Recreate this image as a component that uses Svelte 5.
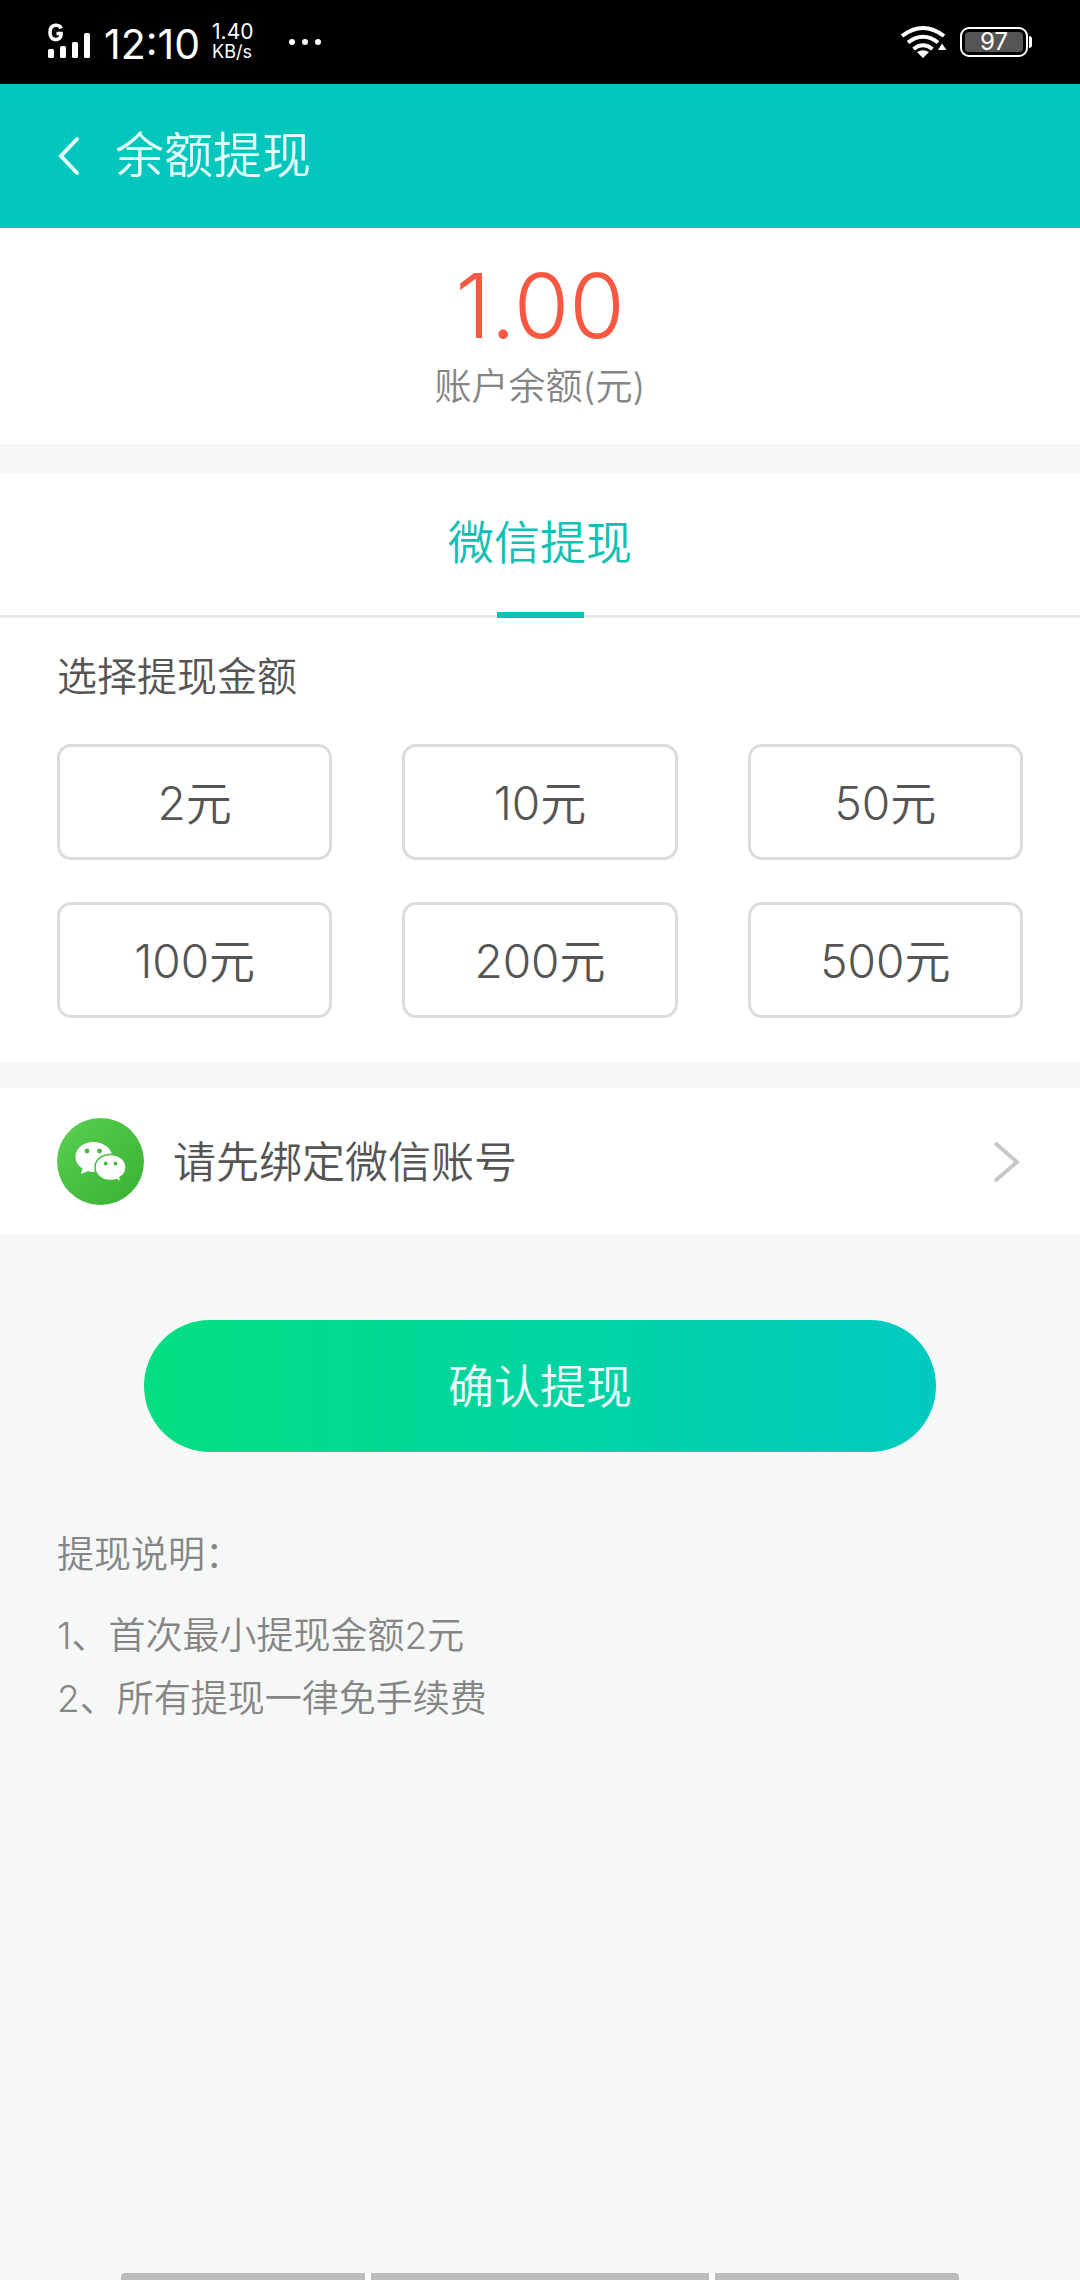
<script>
  const amounts = [2, 10, 50, 100, 200, 500];
  const notes = ['1、首次最小提现金额2元', '2、所有提现一律免手续费'];
  let selected = $state(null);
</script>

<div class="screen">
  <div class="status">
    <svg class="signal" viewBox="0 0 44 40" aria-hidden="true">
      <path d="M13 6.500C12 2 2 1 2 10.500S12.500 19 13 13V11.500H8.500" fill="none" stroke="#fff" stroke-width="3.600" />
      <g fill="#fff">
        <rect x="0" y="27" width="6" height="9" rx="1.500" />
        <rect x="12" y="24" width="6" height="12" rx="1.500" />
        <rect x="24" y="20" width="6" height="16" rx="1.500" />
        <rect x="36" y="11" width="6" height="25" rx="1.500" />
      </g>
    </svg>
    <span class="time">12:10</span>
    <span class="speed"><span>1.40</span><span class="unit">KB/s</span></span>
    <svg class="dots" viewBox="0 0 32 6" aria-hidden="true" fill="#fff">
      <circle cx="3" cy="3" r="3" /><circle cx="16" cy="3" r="3" /><circle cx="29" cy="3" r="3" />
    </svg>
    <svg class="wifi" viewBox="0 0 48 36" aria-hidden="true">
      <g fill="none" stroke="#fff" stroke-width="4">
        <path d="M2 12Q23 -4 44 12" />
        <path d="M8 18.500Q23 7 38 18.500" />
        <path d="M13.500 25Q23 17.500 32.500 25" />
      </g>
      <path d="M17 28Q23 24.500 29 28L23 34ZM38 26L42 19.500L46.500 26Z" fill="#fff" />
    </svg>
    <div class="battery"><span class="charge">97</span></div>
  </div>

  <header class="bar">
    <button class="back" aria-label="返回">
      <svg viewBox="0 0 24 40"><path d="M20 3L4 20L20 37" fill="none" stroke="#e4fffc" stroke-width="4" stroke-linecap="round" /></svg>
    </button>
    <h1>余额提现</h1>
  </header>

  <main>
    <section class="balance">
      <strong>1.00</strong>
      <span>账户余额(元)</span>
    </section>

    <section class="withdraw">
      <nav class="tabs"><button class="tab">微信提现</button></nav>
      <div class="choose">
        <h2>选择提现金额</h2>
        <div class="grid">
          {#each amounts as amount}
            <button class="amount" aria-pressed={selected === amount} onclick={() => (selected = amount)}>{amount}元</button>
          {/each}
        </div>
      </div>
    </section>

    <button class="account">
      <svg class="wechat" viewBox="0 0 87 87" aria-hidden="true">
        <defs>
          <linearGradient id="wechat-green" x1="0" y1="0" x2="1" y2="1">
            <stop offset="0" stop-color="#5bd053" /><stop offset="1" stop-color="#38b031" />
          </linearGradient>
        </defs>
        <circle cx="43.500" cy="43.500" r="43.500" fill="url(#wechat-green)" />
        <path d="M36.500 24C26 24 18.500 30.500 18.500 39C18.500 44 21 47.500 25.500 50.500L24 56L31 53Q35 54.500 40 53.500L55 37C53.500 29.500 46 24 36.500 24Z" fill="#fff" />
        <path d="M53.500 36.500C44.500 36.500 38 42 38 49.500S44.500 62.500 53.500 62.500Q57 62.500 60 61.500L64 64.500L63 59.500C67 57 69 53.500 69 49.500C69 42 62.500 36.500 53.500 36.500Z" fill="#fff" stroke="#47bd40" stroke-width="1.500" />
        <g fill="#47bd40">
          <circle cx="30" cy="33" r="2.400" /><circle cx="42.500" cy="33" r="2.400" />
          <circle cx="48.700" cy="45.500" r="1.900" /><circle cx="58.500" cy="45.500" r="1.900" />
        </g>
      </svg>
      <span>请先绑定微信账号</span>
      <svg class="next" viewBox="0 0 30 42" aria-hidden="true"><path d="M2 2L24 21L2 40" fill="none" stroke="#c8c8c8" stroke-width="4" /></svg>
    </button>

    <button class="confirm">确认提现</button>

    <section class="notes">
      <h3>提现说明：</h3>
      {#each notes as note}
        <p>{note}</p>
      {/each}
    </section>
  </main>

  <div class="system"><i></i><i></i><i></i></div>
</div>

<style>
  :global(body) { margin: 0; }
  .screen {
    min-height: 100vh;
    display: flex;
    flex-direction: column;
    background: #f5f8f7;
    color: #555;
    font-family: Inter, "Noto Sans CJK SC", sans-serif;
    font-weight: 350;
  }
  button {
    border: 0;
    margin: 0;
    padding: 0;
    background: none;
    color: inherit;
    font: inherit;
    cursor: pointer;
  }
  h1, h2, h3, p { margin: 0; font-weight: inherit; }
  svg { display: block; flex: none; }

  .status {
    display: flex;
    align-items: center;
    height: 84px;
    padding: 0 52px 0 48px;
    box-sizing: border-box;
    background: #000;
    color: #fff;
    font-weight: 400;
  }
  .signal { width: 44px; height: 40px; }
  .time { margin-left: 12px; padding-top: 4px; font-size: 41px; line-height: 48px; }
  .speed { display: flex; flex-direction: column; margin-left: 12px; font-size: 21px; line-height: 20px; }
  .unit { font-size: 18px; }
  .dots { width: 32px; height: 6px; margin-left: 36px; }
  .wifi { width: 48px; height: 36px; margin-left: auto; }
  .battery {
    position: relative;
    width: 68px;
    height: 30px;
    margin-left: 12px;
    padding: 3px;
    box-sizing: border-box;
    border: 2px solid #fff;
    border-radius: 9px;
  }
  .battery::after {
    content: "";
    position: absolute;
    right: -6px;
    top: 7px;
    width: 3px;
    height: 12px;
    border-radius: 0 4px 4px 0;
    background: #fff;
  }
  .charge {
    display: block;
    border-radius: 4px;
    background: #555;
    text-align: center;
    font-size: 24px;
    line-height: 20px;
  }

  .bar {
    display: flex;
    align-items: center;
    gap: 34px;
    height: 144px;
    padding: 0 57px;
    background: #03c7bc;
    color: #e4fffc;
  }
  .back svg { width: 24px; height: 40px; }
  h1 { font-size: 49px; line-height: 56px; }

  .balance {
    display: flex;
    flex-direction: column;
    align-items: center;
    padding: 24px 0 30px;
    background: #fff;
  }
  .balance strong { color: #f85842; font-size: 90px; line-height: 108px; font-weight: 300; }
  .balance span { color: #858585; font-size: 37px; line-height: 54px; }

  .withdraw {
    border: solid #f7f7f7;
    border-width: 29px 0 26px;
    background: #fff;
  }
  .tabs { display: flex; justify-content: center; box-shadow: inset 0 -3px #e9e9e9; }
  .tab { color: #11c0b4; font-size: 46px; line-height: 139px; }
  .tab::after { content: ""; display: block; width: 87px; height: 6px; margin: 0 auto; background: #11c0b4; }
  .choose { padding: 30px 57px 44px; }
  h2 { font-size: 40px; line-height: 58px; }
  .grid {
    display: grid;
    grid-template-columns: repeat(3, 1fr);
    gap: 42px 70px;
    margin-top: 38px;
  }
  .amount {
    border: 3px solid #dcdcdc;
    border-radius: 14px;
    padding: 2px 0 0;
    font-size: 46px;
    line-height: 108px;
  }
  .amount[aria-pressed="true"] { border-color: #11c0b4; color: #11c0b4; }

  .account {
    display: flex;
    align-items: center;
    width: 100%;
    padding: 30px 57px 29px;
    background: #fff;
    font-size: 43px;
    line-height: 60px;
  }
  .wechat { width: 87px; height: 87px; margin-right: 29px; }
  .next { width: 30px; height: 42px; margin-left: auto; }

  .confirm {
    display: block;
    width: calc(100% - 288px);
    margin: 86px auto 0;
    border-radius: 66px;
    background: linear-gradient(90deg, #04de80, #00cac1);
    color: #f0fffc;
    font-size: 46px;
    line-height: 132px;
  }

  .notes { padding: 71px 57px; color: #858585; font-size: 37px; line-height: 63px; }
  h3 { margin-bottom: 18px; font-size: 37px; line-height: 63px; }

  .system {
    display: flex;
    gap: 6px;
    height: 7px;
    margin: auto 121px 0;
    background: #fff;
    border-radius: 4px 4px 0 0;
    overflow: hidden;
  }
  .system i { flex: 244; background: #bbbcbb; }
  .system i:nth-child(2) { flex: 338; }
</style>
